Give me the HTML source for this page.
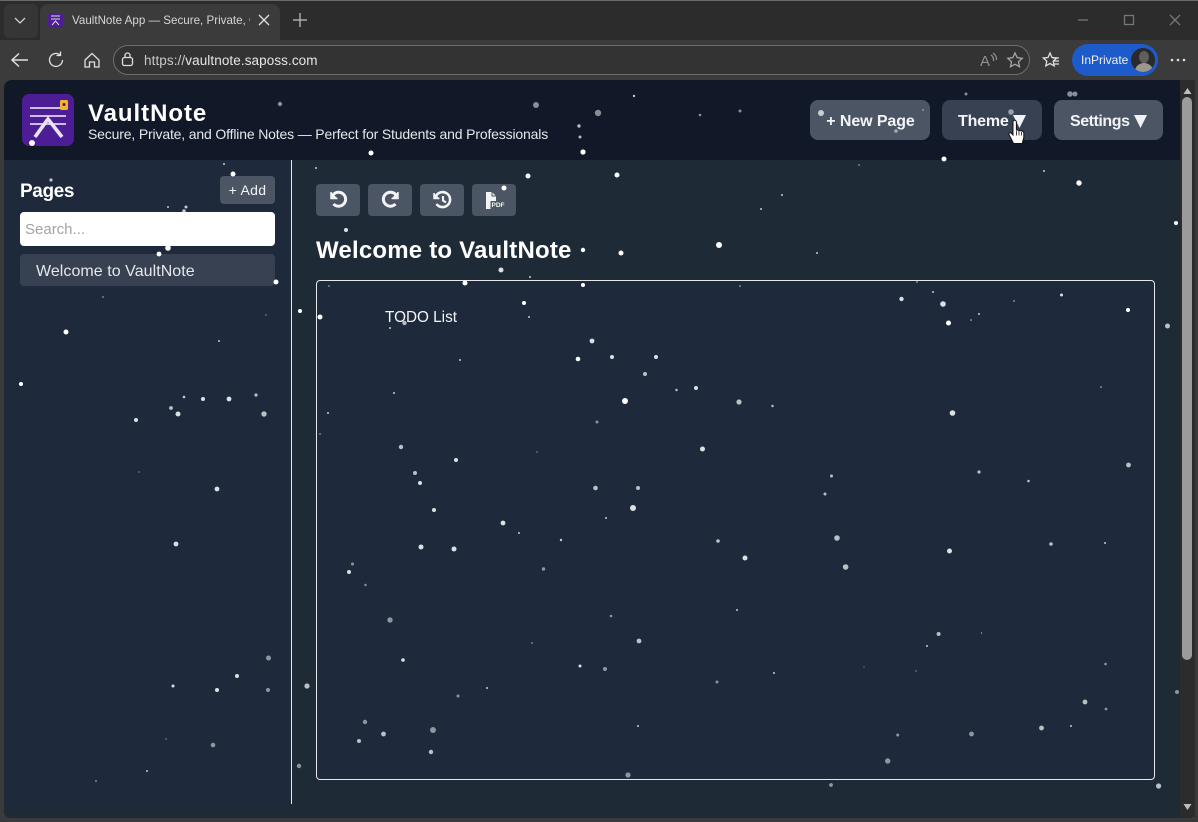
<!DOCTYPE html>
<html><head><meta charset="utf-8"><title>VaultNote App</title>
<style>
html,body{margin:0;padding:0;width:1198px;height:822px;overflow:hidden;background:#3a3a3a;font-family:"Liberation Sans",sans-serif;}
div,span,input{position:absolute;box-sizing:border-box;white-space:nowrap;}
.btn{background:#4b5563;color:#f3f4f6;font-weight:bold;font-size:16px;border-radius:8px;text-align:center;}
.tool{top:184px;width:44px;height:32px;background:#4b5563;border-radius:4px;}
svg{position:absolute;overflow:visible;}
</style></head><body>
<div style="left:0;top:0;width:1198px;height:40px;background:#2c2c2c;"></div>
<div style="left:0;top:0;width:1198px;height:1px;background:#6a6a6a;"></div>
<div style="left:4px;top:4px;width:34px;height:34px;background:#363636;border-radius:6px;"></div>
<div style="left:40px;top:4px;width:240px;height:38px;background:#3b3b3b;border-radius:8px 8px 0 0;"></div>
<div style="left:0;top:40px;width:1198px;height:42px;background:#3b3b3b;"></div>
<div style="left:72px;top:13px;width:178px;height:16px;overflow:hidden;color:#d6d6d6;font-size:11.6px;line-height:15px;">VaultNote App — Secure, Private, O</div>
<div style="left:113px;top:45px;width:917px;height:30px;background:#333;border:1px solid #6e6e6e;border-radius:15px;"></div>
<div style="left:144px;top:52px;color:#e6e6e6;font-size:13.5px;line-height:17px;letter-spacing:.09px;"><span style="position:static;color:#c8c8c8">https://</span>vaultnote.saposs.com</div>
<svg style="left:0;top:0" width="1198" height="80" fill="none" stroke="#e0e0e0" stroke-width="1.3">
<path d="M15 18l5 5 5-5" stroke="#cfcfcf"/>
<rect x="48" y="13" width="15" height="15" rx="3" fill="#4c1d95" stroke="none"/>
<path d="M51 16h9M51 19h9M52 25l3.500-4 3.500 4" stroke="#ddd" stroke-width="1"/>
<path d="M259 15l10 10M269 15l-10 10"/>
<path d="M300 13v14M293 20h14" stroke="#aaa" stroke-width="1.500"/>
<path d="M1078 20h10" stroke="#777"/><rect x="1124.500" y="15.500" width="9" height="9" stroke="#777"/><path d="M1170 15l10 10M1180 15l-10 10" stroke="#777"/>
<path d="M28 60H13M19 53.500l-7 6.500 7 6.500" stroke-width="1.500"/>
<path d="M62.500 60a6.500 6.500 0 1 1-2.500-5.200M60.500 51.500v4h-4" stroke-width="1.300"/>
<path d="M85 60l7-6.500 7 6.500v7h-4.500v-5h-5v5H85z" stroke-width="1.300"/>
<rect x="122.500" y="57.500" width="10" height="8" rx="2"/><path d="M125 57.500v-2a2.500 2.500 0 0 1 5 0v2"/>
<text x="980" y="66" font-family="Liberation Sans" font-size="15" fill="#8f8f8f" stroke="none">A</text>
<path d="M991 55q3 2 2.500 6M993 53q4 3 3.500 7" stroke="#8f8f8f"/>
<path d="M1015 53l2.200 4.700 5 .6-3.700 3.400 1 5-4.500-2.500-4.500 2.500 1-5-3.700-3.400 5-.6z" stroke="#a8a8a8"/>
<path d="M1050 53l2 4.500 4.700.5-3.500 3.200 1 4.700-4.200-2.400-4.200 2.400 1-4.700-3.500-3.200 4.700-.5z"/><path d="M1053 58h6M1054 61h5M1054 64h5"/>
<circle cx="1172" cy="60" r="1.300" fill="#e0e0e0" stroke="none"/><circle cx="1178" cy="60" r="1.300" fill="#e0e0e0" stroke="none"/><circle cx="1184" cy="60" r="1.300" fill="#e0e0e0" stroke="none"/>
</svg>
<div style="left:1072px;top:44px;width:86px;height:32px;background:#1c5bc9;border-radius:16px;"></div>
<div style="left:1081px;top:52px;color:#f0f0f0;font-size:12px;line-height:16px;">InPrivate</div>
<svg style="left:1131px;top:48px" width="24" height="24"><defs><clipPath id="av"><circle cx="12" cy="12" r="12"/></clipPath></defs><g clip-path="url(#av)"><rect width="24" height="24" fill="#2a2a2a"/><ellipse cx="13" cy="9" rx="5" ry="6" fill="#5e5e5e"/><ellipse cx="13" cy="23" rx="9" ry="8" fill="#9d968c"/></g></svg>

<!-- page -->
<div style="left:4px;top:80px;width:1191px;height:738px;background:#1f2a37;border-radius:8px 8px 6px 6px;overflow:hidden;"></div>
<div style="left:4px;top:80px;width:1176px;height:80px;background:#111827;border-radius:8px 0 0 0;"></div>
<div style="left:4px;top:160px;width:287px;height:644px;background:#1e293b;"></div>
<div style="left:291px;top:160px;width:1px;height:644px;background:#e5e7eb;"></div>
<div style="left:1180px;top:80px;width:15px;height:737px;background:#2c2c2c;"></div>
<div style="left:1182px;top:97px;width:10px;height:563px;background:#9b9b9b;border-radius:5px;"></div>
<svg style="left:1180px;top:80px" width="15" height="737" fill="#bdbdbd"><path d="M7.500 8l4 6h-8zM3.500 724h8l-4 6z"/></svg>

<!-- logo -->
<svg style="left:22px;top:94px" width="52" height="52"><rect width="52" height="52" rx="7" fill="#4c1d95"/><path d="M8 14h30M8 22h36M8 30h36" stroke="#ddd6f3" stroke-width="1.800"/><path d="M13 43L26 25l14 18" fill="none" stroke="#e8e4f5" stroke-width="3.600"/><rect x="38" y="6" width="8" height="10" rx="1.500" fill="#f5b32a"/><circle cx="42" cy="10.500" r="1.500" fill="#33205c"/><circle cx="10" cy="49" r="3" fill="#efeaf8"/></svg>
<div style="left:88px;top:99px;color:#fff;font-size:24px;line-height:29px;font-weight:bold;letter-spacing:.95px;">VaultNote</div>
<div style="left:88px;top:126px;color:#e5e7eb;font-size:14px;line-height:17px;letter-spacing:-.16px;">Secure, Private, and Offline Notes — Perfect for Students and Professionals</div>

<div class="btn" style="left:810px;top:100px;width:120px;height:40px;line-height:43px;letter-spacing:-.1px;padding-left:1px;">+ New Page</div>
<div class="btn" style="left:942px;top:100px;width:100px;height:40px;line-height:43px;background:#374151;text-align:left;padding-left:16px;letter-spacing:-.2px;">Theme</div>
<div class="btn" style="left:1054px;top:100px;width:109px;height:40px;line-height:43px;text-align:left;padding-left:16px;letter-spacing:-.45px;">Settings</div>
<svg style="left:0;top:0" width="1198" height="160" fill="#eef2f7"><path d="M1013 115h13l-6.500 13zM1134 115h13l-6.500 13z"/></svg>

<!-- sidebar -->
<div style="left:20px;top:180px;color:#fff;font-size:19px;line-height:24px;font-weight:bold;letter-spacing:-.4px;">Pages</div>
<div class="btn" style="left:220px;top:176px;width:55px;height:28px;line-height:28px;font-size:14px;font-weight:normal;border-radius:4px;letter-spacing:.3px;">+ Add</div>
<div style="left:20px;top:212px;width:255px;height:34px;background:#fff;border-radius:4px;color:#a3a3a3;font-size:15px;line-height:36px;padding-left:5px;">Search...</div>
<div style="left:20px;top:254px;width:255px;height:32px;background:#374151;border-radius:4px;color:#e5e7eb;font-size:16px;line-height:35px;padding-left:16px;letter-spacing:.05px;">Welcome to VaultNote</div>

<!-- tools -->
<div class="tool" style="left:316px"></div><div class="tool" style="left:368px"></div><div class="tool" style="left:420px"></div><div class="tool" style="left:472px"></div>
<svg style="left:0;top:0" width="1198" height="240" fill="none" stroke="#f3f4f6" stroke-width="3">
<path d="M333 195a7 7 0 1 1 .5 9"/><path d="M331 192v6.500h6.500" fill="#f3f4f6" stroke-width="1.500"/>
<path d="M396 195a7 7 0 1 0-.5 9"/><path d="M398 192v6.500h-6.500" fill="#f3f4f6" stroke-width="1.500"/>
<path d="M436 196a7.500 7.500 0 1 1 .5 8" stroke-width="2.600"/><path d="M434 193v5.500h5.500" fill="#f3f4f6" stroke-width="1.500"/><path d="M443 196v4.500l3 2" stroke-width="2.200"/>
<path d="M486 192h6l4 4v13h-10z" fill="#f3f4f6" stroke="none"/><path d="M492 192v4h4" stroke="#4b5563" stroke-width="1"/>
<rect x="490.500" y="201" width="14" height="8.500" fill="#4b5563" stroke="none"/>
</svg>
<div style="left:491.500px;top:201.500px;color:#f3f4f6;font-size:6.500px;line-height:7px;font-weight:bold;">PDF</div>

<div style="left:316px;top:236px;color:#fff;font-size:24px;line-height:29px;font-weight:bold;letter-spacing:.2px;">Welcome to VaultNote</div>
<div style="left:316px;top:280px;width:839px;height:500px;background:#1e293b;border:1px solid #e5e7eb;border-radius:4px;"></div>
<div style="left:385px;top:308px;color:#f3f4f6;font-size:15.300px;line-height:19px;">TODO List</div>

<!-- snow -->
<svg style="left:0;top:0" width="1198" height="822" fill="#fff">
<g opacity="1" id="a">
<circle cx="583" cy="152" r="2.600"/><circle cx="528" cy="176" r="2.500"/><circle cx="617" cy="175" r="2.500"/><circle cx="371" cy="153" r="2.500"/><circle cx="944" cy="159" r="2.500"/><circle cx="1079" cy="183" r="2.700"/><circle cx="504" cy="188" r="2.500"/><circle cx="719" cy="245" r="3"/><circle cx="583" cy="250" r="2.200"/><circle cx="621" cy="253" r="2.500"/><circle cx="233" cy="174" r="2.500"/><circle cx="32" cy="143" r="2.500"/><circle cx="276" cy="282" r="2.500"/><circle cx="168" cy="248" r="2.800"/><circle cx="159" cy="254" r="2.400"/><circle cx="66" cy="332" r="2.500"/><circle cx="21" cy="384" r="2"/><circle cx="320" cy="317" r="2.500"/><circle cx="300" cy="311" r="2"/><circle cx="465" cy="283" r="2.500"/><circle cx="583" cy="285" r="2"/><circle cx="524" cy="303" r="2"/><circle cx="578" cy="359" r="2.300"/><circle cx="625" cy="401" r="3"/><circle cx="948.500" cy="323" r="2.500"/><circle cx="1128" cy="310" r="2"/><circle cx="1176" cy="223" r="2"/></g>
<g opacity=".85"><circle cx="501" cy="270" r="2.500"/><circle cx="346" cy="230" r="2"/><circle cx="178" cy="414" r="2.500"/><circle cx="229" cy="399" r="2.400"/><circle cx="203" cy="399" r="2"/><circle cx="217" cy="489" r="2.400"/><circle cx="176" cy="544" r="2.400"/><circle cx="136" cy="420" r="2"/><circle cx="592" cy="341" r="2.400"/><circle cx="456" cy="460" r="2"/><circle cx="420" cy="483" r="2"/><circle cx="434" cy="510" r="2"/><circle cx="503" cy="523" r="2.400"/><circle cx="421" cy="547" r="2.500"/><circle cx="454" cy="549" r="2.500"/><circle cx="901.500" cy="299" r="2.200"/><circle cx="943" cy="304" r="2.800"/><circle cx="1061.500" cy="295" r="1.500"/><circle cx="612" cy="357" r="2"/><circle cx="656" cy="357" r="2"/><circle cx="696" cy="388" r="2"/><circle cx="952.500" cy="413" r="2.800"/><circle cx="702.500" cy="449" r="2.500"/><circle cx="633" cy="508" r="3"/><circle cx="745" cy="558" r="2.500"/><circle cx="949.500" cy="551" r="2.500"/><circle cx="349" cy="572" r="2"/><circle cx="217" cy="690" r="2"/><circle cx="237" cy="676" r="2"/><circle cx="173" cy="686" r="1.500"/><circle cx="403" cy="660" r="1.800"/><circle cx="580" cy="666" r="1.500"/></g>
<g opacity=".7"><circle cx="1167.500" cy="326" r="2.500"/><circle cx="264" cy="414" r="2.700"/><circle cx="256" cy="395" r="1.600"/><circle cx="171" cy="408" r="1.900"/><circle cx="404.500" cy="323" r="2.200"/><circle cx="401" cy="447" r="2.200"/><circle cx="415" cy="473" r="2"/><circle cx="595.500" cy="488" r="2.300"/><circle cx="739" cy="402" r="2.600"/><circle cx="645" cy="374" r="2"/><circle cx="845.600" cy="567" r="2.800"/><circle cx="837" cy="538" r="2.800"/><circle cx="638" cy="488" r="2"/><circle cx="1128.500" cy="465" r="2.400"/><circle cx="307" cy="686" r="2.600"/><circle cx="383.500" cy="734" r="2.400"/><circle cx="359" cy="741" r="2"/><circle cx="431" cy="752" r="2.200"/><circle cx="1041.500" cy="728" r="2.400"/><circle cx="1085" cy="702" r="2.400"/><circle cx="639" cy="641" r="2.400"/><circle cx="938.600" cy="634" r="2"/><circle cx="821" cy="113" r="3"/><circle cx="1158.600" cy="786" r="2.600"/><circle cx="718" cy="541" r="1.800"/><circle cx="1051" cy="544" r="1.800"/><circle cx="979" cy="472" r="1.600"/><circle cx="1028.500" cy="481" r="1.300"/><circle cx="825" cy="494" r="1.500"/><circle cx="831.500" cy="476" r="1.500"/><circle cx="580" cy="137" r="1.500"/><circle cx="579" cy="126" r="1.700"/></g>
<g opacity=".5"><circle cx="536" cy="105" r="3"/><circle cx="598" cy="113" r="3.200"/><circle cx="1011" cy="112" r="2.800"/><circle cx="1070" cy="94" r="2.800"/><circle cx="1075" cy="94" r="2.500"/><circle cx="280" cy="104" r="2.200"/><circle cx="896" cy="131" r="1.800"/><circle cx="966" cy="94" r="1.500"/><circle cx="740" cy="111" r="1.500"/><circle cx="700" cy="115" r="1.300"/><circle cx="268.500" cy="658" r="2.500"/><circle cx="268" cy="690" r="2"/><circle cx="213" cy="745" r="2.300"/><circle cx="299" cy="766" r="2.200"/><circle cx="390" cy="620" r="2.700"/><circle cx="433" cy="730" r="3"/><circle cx="365" cy="722" r="2.200"/><circle cx="605" cy="669" r="2"/><circle cx="717" cy="682" r="1.500"/><circle cx="458" cy="696" r="1.500"/><circle cx="971.500" cy="734" r="2.400"/><circle cx="887.700" cy="761" r="2.700"/><circle cx="628" cy="775" r="2.600"/><circle cx="831" cy="785" r="1.900"/><circle cx="897.700" cy="735" r="1.500"/><circle cx="1105.500" cy="664" r="1.300"/><circle cx="1106" cy="709" r="1.400"/><circle cx="1177" cy="692" r="2"/><circle cx="611" cy="616" r="1.300"/><circle cx="597" cy="422" r="1.500"/><circle cx="543.500" cy="569" r="1.700"/><circle cx="352.500" cy="564" r="1.500"/><circle cx="365.500" cy="585" r="1.200"/></g>
<g opacity=".75"><circle cx="782" cy="195" r="1"/><circle cx="761" cy="209" r="1"/><circle cx="817" cy="253" r="1"/><circle cx="1044" cy="171" r="1"/><circle cx="859" cy="165" r=".7"/><circle cx="530" cy="277" r="1"/><circle cx="316" cy="168" r="1"/><circle cx="51" cy="180" r="1.600"/><circle cx="224" cy="164" r="1"/><circle cx="168" cy="207" r="1"/><circle cx="186" cy="207" r="1.500"/><circle cx="184" cy="211" r="1.800"/><circle cx="103" cy="297" r=".7"/><circle cx="266" cy="315" r=".6"/><circle cx="219" cy="341" r="1"/><circle cx="184" cy="397" r="1.300"/><circle cx="139" cy="472" r=".6"/><circle cx="390" cy="328" r="1"/><circle cx="329" cy="286" r=".7"/><circle cx="529" cy="317" r="1"/><circle cx="460" cy="360" r="1"/><circle cx="394" cy="393" r="1"/><circle cx="328" cy="413" r="1"/><circle cx="320" cy="434" r=".7"/><circle cx="537" cy="452" r=".6"/><circle cx="519" cy="533" r="1"/><circle cx="561" cy="540" r="1.200"/><circle cx="740" cy="286" r=".8"/><circle cx="917" cy="282" r=".8"/><circle cx="933" cy="292" r="1"/><circle cx="1014" cy="301" r=".8"/><circle cx="979" cy="314" r="1"/><circle cx="971" cy="320" r=".8"/><circle cx="676.500" cy="390" r="1.200"/><circle cx="772.500" cy="406" r="1.200"/><circle cx="1101" cy="387" r=".8"/><circle cx="606" cy="518" r="1"/><circle cx="1105" cy="543" r="1"/><circle cx="737" cy="610" r="1"/><circle cx="981.500" cy="633" r=".6"/><circle cx="927" cy="646" r="1"/><circle cx="774" cy="673" r="1"/><circle cx="864" cy="667" r=".5"/><circle cx="916" cy="671" r=".6"/><circle cx="638" cy="726" r="1"/><circle cx="1071" cy="726" r="1"/><circle cx="532" cy="643" r=".7"/><circle cx="487" cy="688" r="1"/><circle cx="166" cy="739" r=".6"/><circle cx="147" cy="771" r="1"/><circle cx="96" cy="781" r=".8"/><circle cx="634" cy="96" r="1.200"/><circle cx="923" cy="110" r=".7"/></g>
</svg>

<!-- cursor -->
<svg style="left:1008px;top:119px" width="17" height="26"><path d="M5 3a1.700 1.700 0 0 1 3.400 0V11l5.600 1c1.200.2 1.800 1 1.800 2.200v4.300l-1.600 6H5.500L1 15.500c-.7-1.200.9-2.600 2.300-1.200L5 16z" fill="#fff" stroke="#111" stroke-width="1"/><path d="M8.400 12v4.500M11 12v4.500M13.500 13v3.500" stroke="#111" stroke-width=".8"/></svg>
</body></html>
